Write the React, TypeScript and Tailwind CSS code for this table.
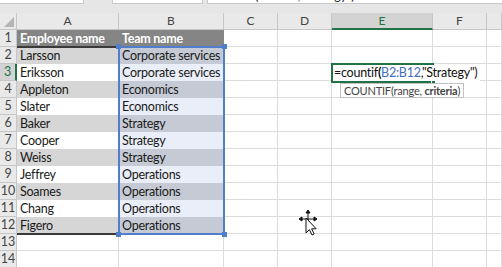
import React from "react";

const names = ["Larsson", "Eriksson", "Appleton", "Slater", "Baker", "Cooper", "Weiss", "Jeffrey", "Soames", "Chang", "Figero"];
const teams = [
  "Corporate services",
  "Corporate services",
  "Economics",
  "Economics",
  "Strategy",
  "Strategy",
  "Strategy",
  "Operations",
  "Operations",
  "Operations",
  "Operations",
];

const letters = ["A", "B", "C", "D", "E", "F", ""];

function ColHeader({ label, active }: { label: string; active?: boolean }) {
  return (
    <div
      className={
        active
          ? "flex items-center justify-center border-r border-b-2 border-r-[#c6c6c6] border-b-[#217346] bg-[#d3d3d3] text-[12px] text-[#217346]"
          : "flex items-center justify-center border-r border-b border-[#c6c6c6] bg-[#e9e9e9] text-[12px] text-[#444]"
      }
    >
      {label}
    </div>
  );
}

function RowHeader({ n, active }: { n: number; active?: boolean }) {
  return (
    <div
      className={
        active
          ? "flex items-center justify-center border-r-2 border-b border-r-[#217346] border-b-[#c6c6c6] bg-[#d3d3d3] text-[12.5px] text-[#217346]"
          : "flex items-center justify-center border-r border-b border-[#c6c6c6] bg-[#e9e9e9] text-[12.5px] text-[#444]"
      }
    >
      {n}
    </div>
  );
}

function Blank() {
  return <div className="border-r border-b border-[#dcdcdc] bg-white" />;
}

function MoveCursor() {
  return (
    <svg width="22" height="28" viewBox="0 0 22 28" className="absolute left-[298px] top-[209px]">
      {/* four-way move marks */}
      <g fill="#111" stroke="#111" strokeWidth="1">
        <line x1="10" y1="3" x2="10" y2="17" />
        <line x1="3" y1="10" x2="17" y2="10" />
        <polygon points="10,1 8,4 12,4" />
        <polygon points="1,10 4,8 4,12" />
        <polygon points="19,10 16,8 16,12" />
      </g>
      {/* arrow pointer */}
      <path
        d="M8 9 L8 24 L11.4 20.6 L14 26 L16.2 25 L13.6 19.8 L18.2 19.8 Z"
        fill="#fff"
        stroke="#111"
        strokeWidth="1"
        strokeLinejoin="round"
      />
    </svg>
  );
}

const cellText = "text-[12.5px] tracking-[-0.25px] leading-[15px]";

export default function App() {
  return (
    <div
      className="relative h-[267px] w-[502px] overflow-hidden bg-white"
      style={{ fontFamily: "Lato, 'Noto Sans', sans-serif" }}
    >
      {/* name box and formula bar strip */}
      <div className="flex h-[13px] bg-[#e6e6e6]">
        <div className="h-[4px] w-[84px] border-r border-b border-[#c9c9c9] bg-white" />
        <div className="ml-[28px] h-[4px] w-[91px] border-x border-b border-[#c9c9c9] bg-white" />
        <div className="relative ml-[4px] h-[4px] flex-1 overflow-hidden border-l border-b border-[#c9c9c9] bg-white">
          <span className="absolute left-[3px] top-[-11px] whitespace-nowrap text-[12.5px] tracking-[-0.25px] leading-[13px] text-[#222]">
            =countif(B2:B12,"Strategy")
          </span>
        </div>
      </div>

      {/* sheet grid */}
      <div className="grid grid-cols-[17px_102px_105px_54px_54px_101px_54px_15px] auto-rows-[17px]">
        {/* select-all corner */}
        <div className="relative border-r border-b border-[#c6c6c6] bg-[#e9e9e9]">
          <svg width="10" height="10" viewBox="0 0 10 10" className="absolute right-[2px] bottom-[2px]">
            <polygon points="10,0 10,10 0,10" fill="#b5b5b5" />
          </svg>
        </div>
        {letters.map((l, i) => (
          <ColHeader key={i} label={l} active={l === "E"} />
        ))}

        {/* row 1: table header */}
        <RowHeader n={1} />
        <div className={"flex items-end bg-[#858585] pb-[1px] pl-[3px] font-bold text-white " + cellText}>
          Employee name
        </div>
        <div className={"flex items-end bg-[#858585] pb-[1px] pl-[3px] font-bold text-white " + cellText}>
          Team name
        </div>
        <Blank />
        <Blank />
        <Blank />
        <Blank />
        <Blank />

        {names.map((name, i) => {
          const n = i + 2;
          const band = n % 2 === 0;
          return (
            <React.Fragment key={n}>
              <RowHeader n={n} active={n === 3} />
              <div
                className={
                  (band ? "bg-[#d6d6d6] " : "bg-white ") +
                  "flex items-end pb-[1px] pl-[3px] text-[#1a1a1a] " +
                  cellText
                }
              >
                {name}
              </div>
              <div
                className={
                  (band ? "bg-[#c5cad5] " : "bg-[#e9eef8] ") +
                  "flex items-end whitespace-nowrap pb-[1px] pl-[3px] text-[#1a1a1a] " +
                  cellText
                }
              >
                {teams[i]}
              </div>
              <Blank />
              <Blank />
              <Blank />
              <Blank />
              <Blank />
            </React.Fragment>
          );
        })}

        {[13, 14].map((n) => (
          <React.Fragment key={n}>
            <RowHeader n={n} />
            <Blank />
            <Blank />
            <Blank />
            <Blank />
            <Blank />
            <Blank />
            <Blank />
          </React.Fragment>
        ))}
      </div>

      {/* table header and last-row rules in column A */}
      <div className="absolute left-[17px] top-[46px] h-[2px] w-[102px] bg-[#3a3a3a]" />
      <div className="absolute left-[17px] top-[233px] h-[2px] w-[102px] bg-[#3a3a3a]" />

      {/* referenced range B2:B12 */}
      <div className="absolute left-[118px] top-[46px] h-[189px] w-[107px] border-2 border-[#4f7fcb]" />
      <div className="absolute left-[116px] top-[44px] h-[5px] w-[5px] bg-[#4f7fcb]" />
      <div className="absolute left-[222px] top-[44px] h-[5px] w-[5px] bg-[#4f7fcb]" />
      <div className="absolute left-[116px] top-[232px] h-[5px] w-[5px] bg-[#4f7fcb]" />
      <div className="absolute left-[222px] top-[232px] h-[5px] w-[5px] bg-[#4f7fcb]" />

      {/* cell E3 in edit mode */}
      <div className={"absolute left-[332px] top-[64px] flex h-[17px] w-[148px] items-end whitespace-nowrap bg-white pb-[1px] pl-[2px] text-[#111] " + cellText}>
        <span>=countif</span>
        <span className="font-bold">(</span>
        <span className="text-[#3f6fc4]">B2:B12</span>
        <span>,"Strategy")</span>
      </div>
      <div className="absolute left-[331px] top-[63px] h-[20px] w-[103px] border-y-2 border-l-2 border-[#217346]" />
      <div className="absolute left-[431px] top-[80px] h-[5px] w-[5px] border border-white bg-[#217346]" />

      {/* function tooltip */}
      <div className="absolute left-[340px] top-[83px] flex h-[15px] items-center whitespace-nowrap border border-[#c2c2c2] bg-white px-[3px] text-[11px] leading-[13px] tracking-[-0.2px] text-[#444]">
        <span>COUNTIF(range,&nbsp;</span>
        <span className="font-bold">criteria</span>
        <span>)</span>
      </div>

      <MoveCursor />
    </div>
  );
}
